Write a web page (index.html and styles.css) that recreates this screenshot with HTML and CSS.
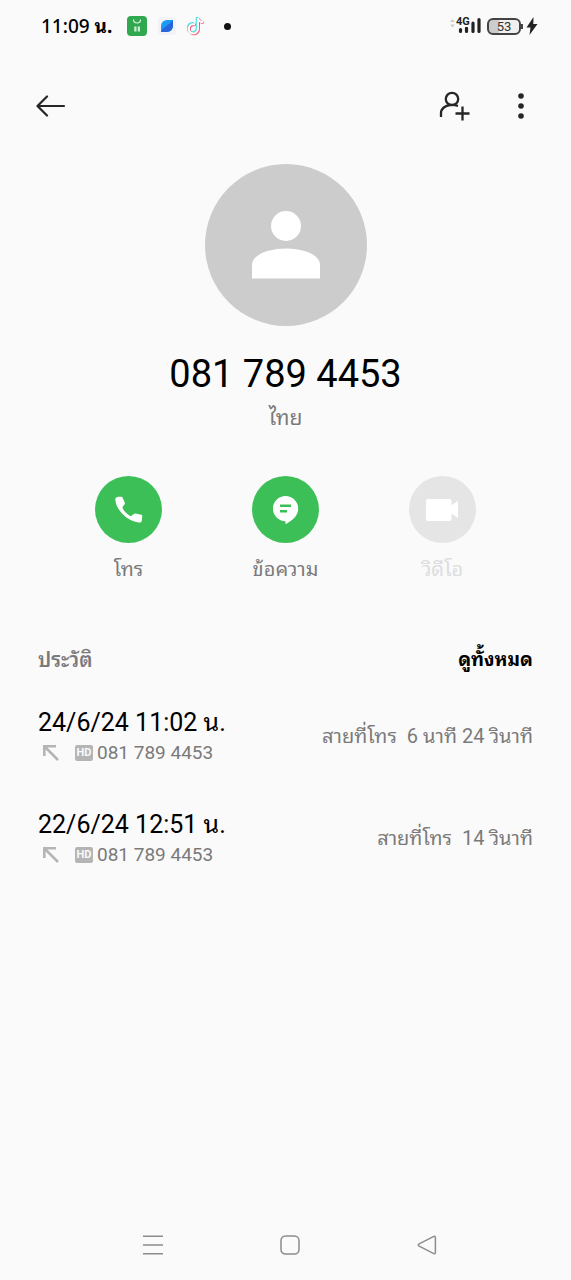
FILE: index.html
```html
<!DOCTYPE html>
<html lang="th">
<head>
<meta charset="utf-8">
<meta name="viewport" content="width=device-width, initial-scale=1">
<title>081 789 4453</title>
<link rel="stylesheet" href="styles.css">
</head>
<body>
<div class="screen">
  <div class="status">
    <div class="status-left">
      <span class="clock">11:09 <b>น.</b></span>
      <svg class="app-icon" width="20" height="20" viewBox="0 0 20 20"><rect width="20" height="20" rx="4" fill="#2fa84f"/><path d="M6.500 3.500a3.500 3.500 0 0 0 7 0" fill="none" stroke="#dff5e4" stroke-width="1.200"/><path d="M7.200 10.500h2.300v5H7.200zM10.700 10.500H13v5h-2.300z" fill="#c9edd1"/></svg>
      <svg class="app-icon" width="18" height="18" viewBox="0 0 18 18"><rect width="18" height="18" rx="4" fill="#f1f3f6"/><path d="M3 14.500V9a6 6 0 0 1 6-6h6v6a6 6 0 0 1-6 6H3z" fill="#1b9af5"/><path d="M3 15C5 10 10 9 15 3v6a6 6 0 0 1-6 6z" fill="#2865dc"/></svg>
      <svg class="app-icon" width="18" height="20" viewBox="0 0 18 20" fill="none" stroke-width="2.600"><path d="M8 8.500a4.600 4.600 0 1 0 3 4.600V2c.5 2.800 2.300 4 5 4.300" stroke="#5fe3e3" transform="translate(-1 -1)"/><path d="M8 8.500a4.600 4.600 0 1 0 3 4.600V2c.5 2.800 2.300 4 5 4.300" stroke="#ef4d70" transform="translate(.6 .5)"/><path d="M8 8.500a4.600 4.600 0 1 0 3 4.600V2c.5 2.800 2.300 4 5 4.300" stroke="#fff" stroke-width="2"/></svg>
      <span class="dot"></span>
    </div>
    <div class="status-right">
      <div class="signal">
        <svg width="32" height="20" viewBox="0 0 32 20"><path d="M0 6 2.500 3 5 6zM0 8.500 2.500 11.500 5 8.500z" fill="#ccc"/><path d="M10.500 13.500v2M16.500 12v3.500M23 7v8.500M29 3.500v12" stroke="#222" stroke-width="3.200" stroke-linecap="round"/></svg>
        <span class="network">4G</span>
      </div>
      <div class="battery"><span>53</span></div>
      <svg width="12" height="18" viewBox="0 0 12 18"><path d="M7.500 0 .5 10.500h4L3.500 18l8-11H7.300z" fill="#222"/></svg>
    </div>
  </div>

  <header class="toolbar">
    <button class="icon-button" aria-label="กลับ"><svg width="30" height="24" viewBox="0 0 30 24" fill="none" stroke="#262626" stroke-width="2.200" stroke-linecap="round" stroke-linejoin="round"><path d="M28 12H2M11 2.500 1.500 12l9.500 9.500"/></svg></button>
    <div class="toolbar-actions">
      <button class="icon-button" aria-label="เพิ่มรายชื่อ"><svg width="32" height="32" viewBox="0 0 32 32" fill="none" stroke="#262626" stroke-width="2.300"><circle cx="13" cy="9" r="6.200"/><path d="M2 27v-4c0-4.500 4.500-7.500 9-8 3-.3 5.500 0 8 1M23.500 16.500v14M16.500 23.500h14"/></svg></button>
      <button class="icon-button" aria-label="ตัวเลือกเพิ่มเติม"><svg width="8" height="28" viewBox="0 0 8 28" fill="#262626"><circle cx="4" cy="4" r="2.800"/><circle cx="4" cy="14" r="2.800"/><circle cx="4" cy="24" r="2.800"/></svg></button>
    </div>
  </header>

  <main>
    <section class="contact">
      <svg class="avatar" viewBox="0 0 162 162"><circle cx="81" cy="81" r="81" fill="#ccc"/><circle cx="81" cy="62" r="15" fill="#fff"/><path d="M47 114.500V101c0-10 16-16.500 34-16.500s34 6.500 34 16.500v13.500z" fill="#fff"/></svg>
      <h1 class="number">081 789 4453</h1>
      <p class="region">ไทย</p>
    </section>

    <div class="actions">
      <button class="action">
        <span class="action-circle"><svg width="67" height="67" viewBox="0 0 67 67"><path d="M20.300 23.500c0-2 1.500-2.800 3.500-2.800h3.400c1 3 2.300 4.600 2.700 6.200.4 2-2.700 3.200-2.400 4.600.7 3 4 6.500 7.800 8.500 1.600.8 2.500-2.600 5-2.500l6 1.200c.9.200 1 .8.900 1.800l-.3 3.800c-.2 1.800-1.200 2.600-3.200 2.200C31.500 44.500 21 34 20.300 23.500z" fill="#fff"/></svg></span>
        <span>โทร</span>
      </button>
      <button class="action">
        <span class="action-circle"><svg width="67" height="67" viewBox="0 0 67 67"><path d="M33.500 20a12.700 12.700 0 0 1 12.700 12.700c0 7-5.700 11.800-12.700 15.500v-3a12.600 12.600 0 0 1 0-25.200z" fill="#fff"/><path d="M28 29.800h11M28 35.300h7" stroke="#3cbf57" stroke-width="2.400"/></svg></span>
        <span>ข้อความ</span>
      </button>
      <button class="action" disabled>
        <span class="action-circle"><svg width="67" height="67" viewBox="0 0 67 67"><path d="M19 23h21.500a2 2 0 0 1 2 2v4l6.500-4v17l-6.500-4.500v5.500a2 2 0 0 1-2 2H19a2 2 0 0 1-2-2V25a2 2 0 0 1 2-2z" fill="#fff"/></svg></span>
        <span>วิดีโอ</span>
      </button>
    </div>

    <section class="history">
      <div class="history-head">
        <h2>ประวัติ</h2>
        <a href="#all">ดูทั้งหมด</a>
      </div>
      <ul class="calls">
        <li class="call">
          <div>
            <div class="when">24/6/24 11:02 น.</div>
            <div class="line"><svg class="arrow" width="18" height="18" viewBox="0 0 18 18" fill="none" stroke="#b5b5b5" stroke-width="2.600"><path d="M2.300 12V2.300H14M3 3l13 13"/></svg><span class="hd">HD</span><span>081 789 4453</span></div>
          </div>
          <div class="duration">สายที่โทร&nbsp; 6 นาที 24 วินาที</div>
        </li>
        <li class="call">
          <div>
            <div class="when">22/6/24 12:51 น.</div>
            <div class="line"><svg class="arrow" width="18" height="18" viewBox="0 0 18 18" fill="none" stroke="#b5b5b5" stroke-width="2.600"><path d="M2.300 12V2.300H14M3 3l13 13"/></svg><span class="hd">HD</span><span>081 789 4453</span></div>
          </div>
          <div class="duration">สายที่โทร&nbsp; 14 วินาที</div>
        </li>
      </ul>
    </section>
  </main>

  <nav class="system-nav">
    <button class="icon-button" aria-label="แอปล่าสุด"><svg width="20" height="20" viewBox="0 0 20 20" stroke="#8c8c8c" stroke-width="1.500"><path d="M0 1.200h20M0 10h20M0 18.800h20"/></svg></button>
    <button class="icon-button" aria-label="หน้าหลัก"><svg width="20" height="20" viewBox="0 0 20 20" fill="none" stroke="#8c8c8c" stroke-width="1.500"><rect x="1" y="1" width="18" height="18" rx="4.500"/></svg></button>
    <button class="icon-button" aria-label="ย้อนกลับ"><svg width="20" height="20" viewBox="0 0 20 20" fill="none" stroke="#8c8c8c" stroke-width="1.500"><path d="M2.200 8.900 16.300 1.600Q18.400.8 18.400 2.800v14.400q0 2-2.100 1.200L2.200 11.100q-1.900-1.100 0-2.200z"/></svg></button>
  </nav>
</div>
</body>
</html>
```
FILE: styles.css
```css
* { box-sizing: border-box; }

body {
  margin: 0;
  background: #fafafa;
  color: #000;
  font-family: Roboto, "Noto Sans Thai Looped", "Noto Looped Thai", Loma, Waree, Garuda, "Noto Serif Thai", sans-serif;
}

h1, h2, p, ul { margin: 0; padding: 0; font-weight: 400; }

button {
  padding: 0;
  border: 0;
  background: none;
  font: inherit;
  color: inherit;
}

svg { display: block; flex: none; }

.screen {
  display: flex;
  flex-direction: column;
  min-height: 100vh;
}

.status {
  display: flex;
  justify-content: space-between;
  align-items: center;
  height: 52px;
  padding: 0 33px 0 41px;
}

.status-left { display: flex; align-items: center; gap: 11px; }

.clock {
  margin-right: 4px;
  font-family: "Noto Sans", "Noto Sans Thai Looped", "Noto Looped Thai", Loma, Waree, Garuda, "Noto Serif Thai", sans-serif;
  font-size: 19px;
  font-weight: 500;
  line-height: 24px;
}

.dot {
  width: 7px;
  height: 7px;
  margin-left: 8px;
  border-radius: 50%;
  background: #111;
}

.status-right { display: flex; align-items: center; gap: 5px; }

.signal { position: relative; }

.network {
  position: absolute;
  top: 0;
  left: 6px;
  background: #fafafa;
  font-size: 11px;
  font-weight: 700;
  line-height: 11px;
  color: #222;
}

.battery {
  position: relative;
  width: 34px;
  height: 17px;
  border: 2px solid #444;
  border-radius: 6px;
  background: linear-gradient(90deg, #ccc 32%, #f0f0f0 32%);
  font-size: 13px;
  line-height: 13px;
  text-align: center;
  color: #333;
}

.battery::after {
  content: "";
  position: absolute;
  top: 4px;
  right: -4px;
  width: 2px;
  height: 5px;
  background: #444;
}

.toolbar {
  display: flex;
  justify-content: space-between;
  align-items: center;
  height: 108px;
  padding: 0 46px 0 36px;
}

.toolbar-actions { display: flex; align-items: center; gap: 46px; }

.contact {
  display: flex;
  flex-direction: column;
  align-items: center;
  padding-top: 4px;
}

.avatar { width: 162px; height: 162px; }

.number { margin-top: 24px; font-size: 38px; line-height: 48px; }

.region {
  margin-top: 8px;
  font-size: 21px;
  line-height: 24px;
  color: #7a7a7a;
}

.actions {
  display: grid;
  grid-template-columns: repeat(3, 1fr);
  padding: 46px 50px 0;
}

.action {
  display: flex;
  flex-direction: column;
  align-items: center;
  gap: 14px;
  font-size: 20px;
  line-height: 24px;
  color: #7a7a7a;
}

.action-circle { border-radius: 50%; background: #3cbf57; }

.action:disabled { color: #ddd; }

.action:disabled .action-circle { background: #e5e5e5; }

.history { padding: 67px 38px 0; }

.history-head {
  display: flex;
  justify-content: space-between;
  font-size: 19px;
  line-height: 24px;
}

.history-head h2 { font-size: 20px; font-weight: 600; color: #7a7a7a; }

.history-head a { font-weight: 700; color: #000; text-decoration: none; }

.calls {
  display: grid;
  gap: 42px;
  padding-top: 34px;
  list-style: none;
}

.call {
  display: flex;
  justify-content: space-between;
  align-items: center;
}

.when { font-size: 25px; line-height: 34px; }

.line {
  display: flex;
  align-items: center;
  padding-left: 4px;
  font-size: 19px;
  line-height: 26px;
  color: #7a7a7a;
}

.arrow { margin-right: 15px; }

.hd {
  width: 18px;
  height: 16px;
  margin-right: 4px;
  border-radius: 2px;
  background: #b5b5b5;
  font-size: 11px;
  font-weight: 700;
  line-height: 16px;
  text-align: center;
  color: #fafafa;
}

.duration { font-size: 20px; line-height: 24px; color: #7a7a7a; }

.system-nav {
  display: grid;
  grid-template-columns: repeat(3, 1fr);
  justify-items: center;
  align-items: center;
  height: 70px;
  margin-top: auto;
  padding: 0 76px 0 85px;
}
```
